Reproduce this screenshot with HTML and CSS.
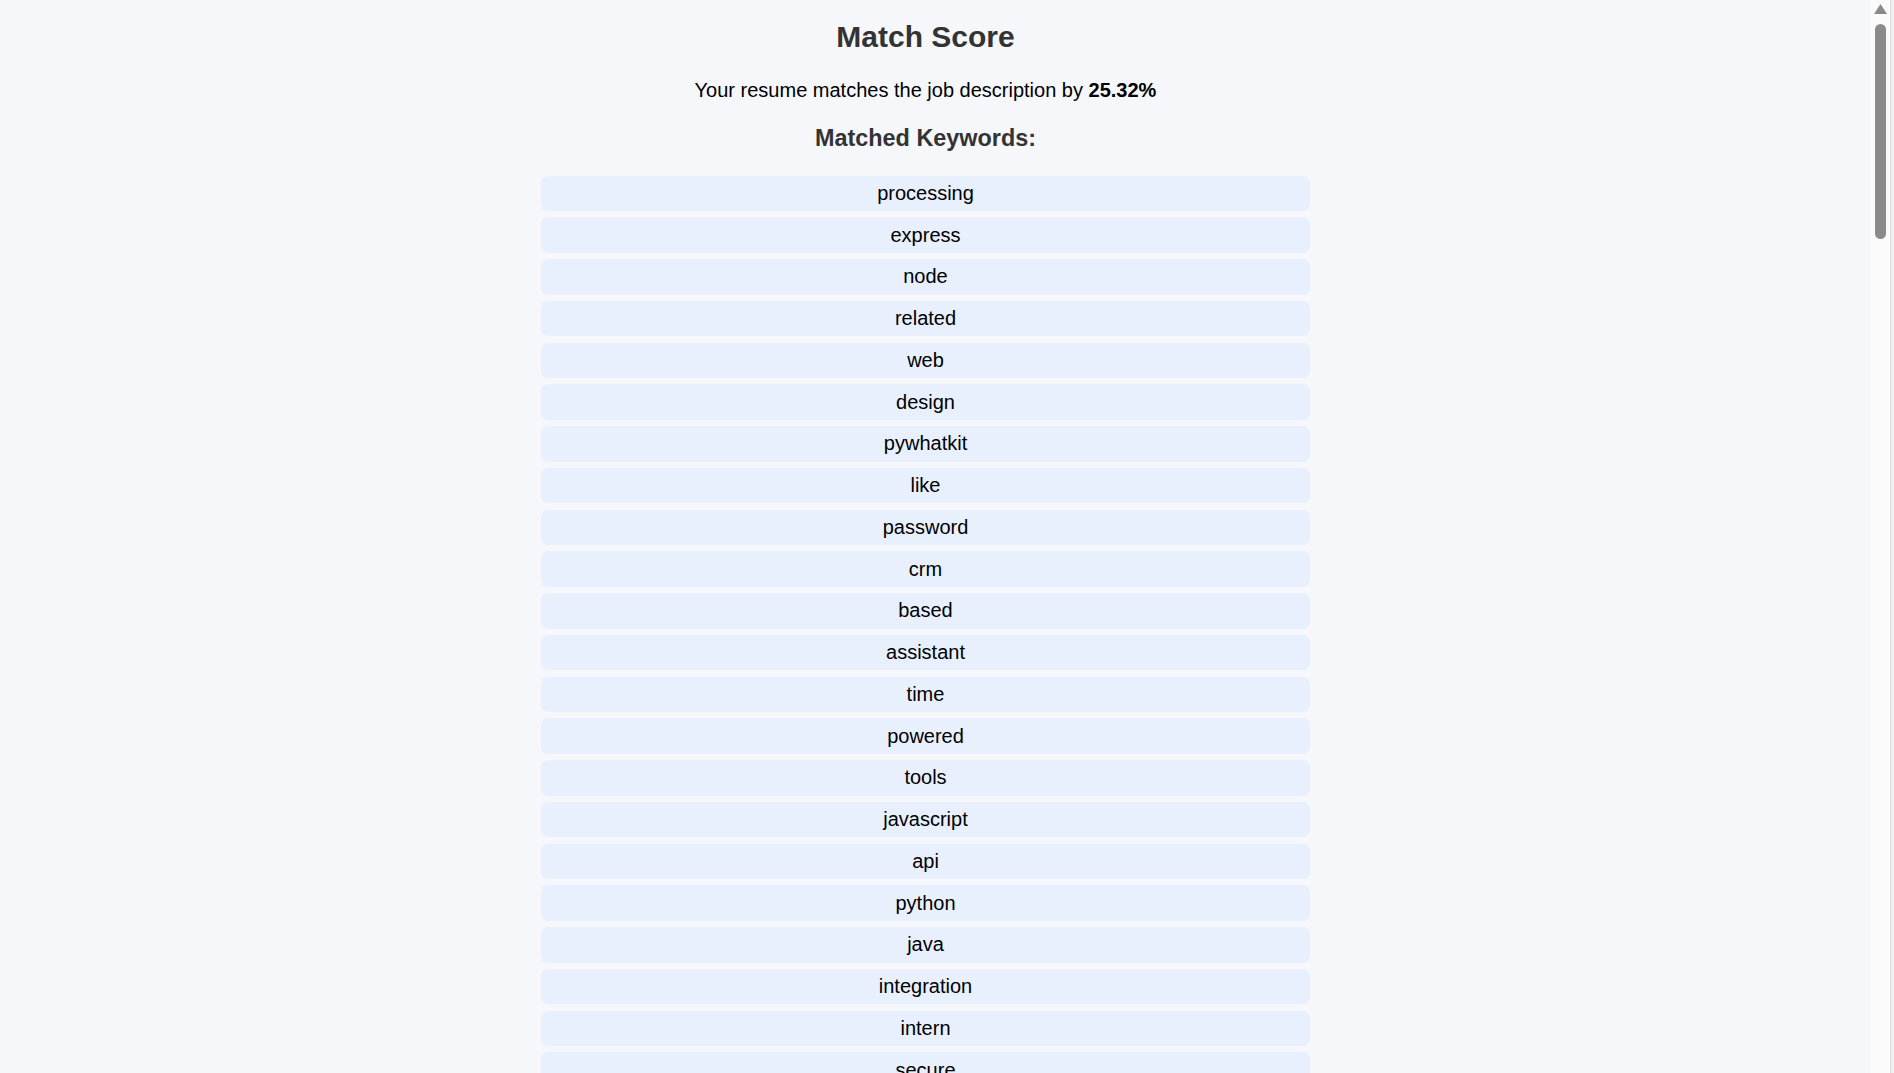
FILE: index.html
```html
<!DOCTYPE html>
<html lang="en">
<head>
<meta charset="utf-8">
<title>Match Score</title>
<link rel="stylesheet" href="styles.css">
</head>
<body>
<main class="page">
  <h2 class="title">Match Score</h2>
  <p class="summary">Your resume matches the job description by <strong>25.32%</strong></p>
  <h3 class="subtitle">Matched Keywords:</h3>
  <ul class="keywords">
    <li class="keyword">processing</li>
    <li class="keyword">express</li>
    <li class="keyword">node</li>
    <li class="keyword">related</li>
    <li class="keyword">web</li>
    <li class="keyword">design</li>
    <li class="keyword">pywhatkit</li>
    <li class="keyword">like</li>
    <li class="keyword">password</li>
    <li class="keyword">crm</li>
    <li class="keyword">based</li>
    <li class="keyword">assistant</li>
    <li class="keyword">time</li>
    <li class="keyword">powered</li>
    <li class="keyword">tools</li>
    <li class="keyword">javascript</li>
    <li class="keyword">api</li>
    <li class="keyword">python</li>
    <li class="keyword">java</li>
    <li class="keyword">integration</li>
    <li class="keyword">intern</li>
    <li class="keyword">secure</li>
    <li class="keyword">development</li>
    <li class="keyword">data</li>
    <li class="keyword">management</li>
    <li class="keyword">application</li>
    <li class="keyword">html</li>
    <li class="keyword">css</li>
    <li class="keyword">react</li>
    <li class="keyword">database</li>
  </ul>
</main>
<div class="scrollbar" aria-hidden="true">
  <svg class="scroll-arrow" width="13" height="10" viewBox="0 0 13 10"><polygon points="0,10 13,10 6.5,0" fill="#8a8a8a"/></svg>
  <div class="scroll-thumb"></div>
</div>
</body>
</html>
```
FILE: styles.css
```css
html, body {
  margin: 0;
  padding: 0;
  background: #f5f7fa;
}

body {
  font-family: "Liberation Sans", Arial, sans-serif;
  font-size: 20px;
  color: #000;
}

.page {
  width: 1851px;
  padding-top: 20px;
  padding-bottom: 20px;
  text-align: center;
}

.title {
  margin: 0 0 24px;
  font-size: 30px;
  line-height: 34.5px;
  font-weight: bold;
  color: #333;
}

.summary {
  margin: 0 0 23px;
  line-height: 23px;
}

.subtitle {
  margin: 0 0 24px;
  font-size: 23.4px;
  line-height: 27px;
  font-weight: bold;
  color: #333;
}

.keywords {
  list-style: none;
  margin: 0 auto;
  padding: 0;
  width: 769px;
  display: flex;
  flex-direction: column;
  gap: 6.25px;
}

.keyword {
  background: #e8f0fe;
  border-radius: 7px;
  padding: 6.25px 0;
  line-height: 23px;
  color: #000;
}

/* imitation of the browser's scrollbar drawn over the page edge */
.scrollbar {
  position: fixed;
  top: 0;
  right: 0;
  bottom: 0;
  width: 19px;
  background: #fbfbfb;
  border-right: 1px solid #dedede;
  box-shadow: 3px 0 0 #f0f0f0;
  margin-right: 3px;
  display: flex;
  flex-direction: column;
  align-items: center;
}

.scroll-arrow {
  display: block;
  margin-top: 4px;
}

.scroll-thumb {
  margin-top: 10px;
  width: 11px;
  height: 215px;
  border-radius: 6px;
  background: #8b8b8b;
}
```
